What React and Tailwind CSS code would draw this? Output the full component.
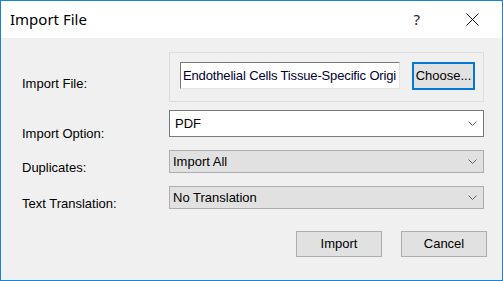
import React from "react";

const Chevron = () => (
  <svg width="9" height="6" viewBox="0 0 9 6" className="shrink-0">
    <path d="M0.5 0.5 L4.5 4.5 L8.5 0.5" fill="none" stroke="#606060" strokeWidth="1" />
  </svg>
);

const Select = ({ value, white }) => (
  <div
    className={
      white
        ? "flex items-center justify-between h-[27px] w-[315px] bg-white border border-[#7a7a7a] pl-[5px] pr-[6px]"
        : "flex items-center justify-between h-[23px] w-[315px] bg-[#e1e1e1] border border-[#adadad] pl-[3px] pr-[6px]"
    }
  >
    <span>{value}</span>
    <Chevron />
  </div>
);

const Label = ({ children, pt }) => (
  <div className={`w-[147px] shrink-0 leading-[15px] whitespace-nowrap ${pt}`}>{children}</div>
);

export default function App() {
  return (
    <div className="w-[503px] h-[281px] border border-[#1883d7] flex flex-col text-[13px] text-black font-['Liberation_Sans',Arial,sans-serif]">
      {/* title bar */}
      <div className="h-[37px] bg-white flex items-center shrink-0">
        <span className="ml-[9px] text-[15px] text-black font-['Noto_Sans',sans-serif]">
          Import File
        </span>
        <span className="ml-auto mr-[46px] text-[15px] text-[#222] font-['Noto_Sans',sans-serif]">?</span>
        <svg width="13" height="13" viewBox="0 0 13 13" className="mr-[23px]">
          <path d="M0.5 0.5 L12.5 12.5 M12.5 0.5 L0.5 12.5" stroke="#111" strokeWidth="1" />
        </svg>
      </div>

      {/* body */}
      <div className="flex-1 bg-[#f0f0f0] pl-[21px] pt-[14px]">
        <div className="flex h-[50px]">
          <Label pt="pt-[24px]">Import File:</Label>
          <div className="w-[315px] h-[50px] border border-[#dcdcdc] flex pl-[10px] pt-[9px] gap-[12px]">
            <div className="w-[220px] h-[27px] bg-white border border-t-[#7a7a7a] border-l-[#7a7a7a] border-r-[#e3e3e3] border-b-[#e3e3e3] flex items-center pl-[2px] overflow-hidden whitespace-nowrap tracking-[-0.15px] text-[#000033]">
              Endothelial Cells Tissue-Specific Origi
            </div>
            <button className="w-[63px] h-[28px] bg-[#e1e1e1] border-2 border-[#0078d7] flex items-center justify-center">
              Choose...
            </button>
          </div>
        </div>

        <div className="flex h-[27px] mt-[8px]">
          <Label pt="pt-[16px]">Import Option:</Label>
          <Select value="PDF" white />
        </div>

        <div className="flex h-[23px] mt-[13px]">
          <Label pt="pt-[10px]">Duplicates:</Label>
          <Select value="Import All" />
        </div>

        <div className="flex h-[23px] mt-[13px]">
          <Label pt="pt-[10px]">Text Translation:</Label>
          <Select value="No Translation" />
        </div>

        <div className="flex justify-end gap-[19px] pr-[15px] mt-[22px]">
          <button className="w-[86px] h-[26px] bg-[#e1e1e1] border border-[#adadad]">Import</button>
          <button className="w-[86px] h-[26px] bg-[#e1e1e1] border border-[#adadad]">Cancel</button>
        </div>
      </div>
    </div>
  );
}
